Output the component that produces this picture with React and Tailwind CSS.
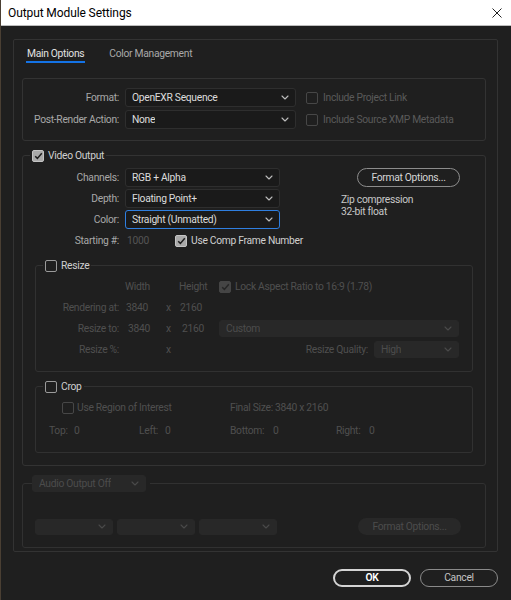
import React from "react";

function Chevron({ className = "" }) {
  return (
    <svg width="8" height="5" viewBox="0 0 8 5" className={className} fill="none">
      <path d="M1 1l3 3 3-3" stroke="currentColor" strokeWidth="1.1" strokeLinecap="round" strokeLinejoin="round" />
    </svg>
  );
}

function Dropdown({ value, className = "", active, disabled }) {
  const look = disabled
    ? "bg-[#282828] border-[#282828] text-[#4c4c4c]"
    : active
    ? "bg-[#1a1a1a] border-[#2f7fe0] text-[#dcdcdc]"
    : "bg-[#1a1a1a] border-[#2e2e2e] text-[#dcdcdc]";
  return (
    <div className={`flex items-center justify-between pl-[6px] pr-[6px] rounded-[3px] border shrink-0 ${look} ${className}`}>
      <span className="truncate">{value}</span>
      <Chevron className={disabled ? "text-[#4a4a4a]" : "text-[#bdbdbd]"} />
    </div>
  );
}

function Checkbox({ checked, disabled }) {
  const box = disabled
    ? checked
      ? "bg-[#454545] border-[#454545]"
      : "border-[#474747]"
    : checked
    ? "bg-[#a9a9a9] border-[#c4c4c4]"
    : "border-[#9a9a9a]";
  return (
    <div className={`w-[12px] h-[12px] shrink-0 rounded-[2px] border-[1.5px] flex items-center justify-center ${box}`}>
      {checked && (
        <svg width="9" height="8" viewBox="0 0 9 8" fill="none">
          <path d="M1.2 4.2l2.2 2.2L7.8 1.2" stroke={disabled ? "#262626" : "#1f1f1f"} strokeWidth="1.5" />
        </svg>
      )}
    </div>
  );
}

function GroupTitle({ checked, label }) {
  return (
    <div className="flex items-center gap-[4px] -mt-[7px] ml-[7px] px-[2px] w-fit h-[13px] bg-[#1f1f1f]">
      <Checkbox checked={checked} />
      <span className="text-[#cfcfcf] leading-[13px]">{label}</span>
    </div>
  );
}

export default function App() {
  return (
    <div className="w-[511px] h-[600px] bg-[#1f1f1f] flex flex-col overflow-hidden border-l border-[#4a3f33] font-['Roboto','Liberation_Sans',sans-serif] text-[10.3px] tracking-[-0.3px] whitespace-nowrap">
      {/* title bar */}
      <div className="h-[26px] shrink-0 bg-white flex items-center justify-between pl-[7px] pr-[9px] border-b border-[#bdbdbd]">
        <span className="text-[12px] tracking-[-0.1px] text-black">Output Module Settings</span>
        <svg width="10" height="10" viewBox="0 0 10 10">
          <path d="M0.5 0.5l9 9M9.5 0.5l-9 9" stroke="#222" strokeWidth="1" />
        </svg>
      </div>

      <div className="pt-[13px] pl-[12px]">
        <div className="w-[485px] h-[513px] border border-[#333333] rounded-[2px]">
          {/* tabs */}
          <div className="flex pl-[12px] pt-[7px] gap-[24px]">
            <span className="text-[#e2e2e2] leading-[13px] pb-[1px] border-b-2 border-[#1473e6] px-[1px]">Main Options</span>
            <span className="text-[#a9a9a9] leading-[13px]">Color Management</span>
          </div>

          <div className="ml-[8px] w-[464px]">
            {/* format box */}
            <div className="mt-[15px] h-[63px] border border-[#333333] rounded-[3px] pt-[9px] flex flex-col gap-[3px]">
              <div className="flex items-center h-[19px]">
                <span className="w-[96px] text-right text-[#a8a8a8]">Format:</span>
                <Dropdown value="OpenEXR Sequence" className="ml-[6px] w-[171px] h-[19px]" />
                <div className="ml-[10px]"><Checkbox disabled /></div>
                <span className="ml-[5px] text-[#5a5a5a]">Include Project Link</span>
              </div>
              <div className="flex items-center h-[19px]">
                <span className="w-[96px] text-right text-[#a8a8a8]">Post-Render Action:</span>
                <Dropdown value="None" className="ml-[6px] w-[171px] h-[19px]" />
                <div className="ml-[10px]"><Checkbox disabled /></div>
                <span className="ml-[5px] text-[#5a5a5a]">Include Source XMP Metadata</span>
              </div>
            </div>

            {/* video output */}
            <div className="mt-[14px] h-[311px] border border-[#333333] rounded-[3px]">
              <GroupTitle checked label="Video Output" />
              <div className="flex mt-[6px]">
                <div className="w-[257px] shrink-0 flex flex-col gap-[2px]">
                  <div className="flex items-center h-[19px]">
                    <span className="w-[96px] text-right text-[#a8a8a8]">Channels:</span>
                    <Dropdown value="RGB + Alpha" className="ml-[6px] w-[155px] h-[19px]" />
                  </div>
                  <div className="flex items-center h-[19px]">
                    <span className="w-[96px] text-right text-[#a8a8a8]">Depth:</span>
                    <Dropdown value="Floating Point+" className="ml-[6px] w-[155px] h-[19px]" />
                  </div>
                  <div className="flex items-center h-[19px]">
                    <span className="w-[96px] text-right text-[#a8a8a8]">Color:</span>
                    <Dropdown value="Straight (Unmatted)" active className="ml-[6px] w-[155px] h-[19px]" />
                  </div>
                  <div className="flex items-center h-[20px]">
                    <span className="w-[96px] shrink-0 text-right text-[#a8a8a8]">Starting #:</span>
                    <span className="ml-[8px] w-[42px] shrink-0 text-[#555555]">1000</span>
                    <div className="ml-[6px]"><Checkbox checked /></div>
                    <span className="ml-[4px] text-[#cfcfcf]">Use Comp Frame Number</span>
                  </div>
                </div>
                <div className="ml-[61px] flex flex-col">
                  <div className="ml-[16px] w-[103px] h-[19px] rounded-full border-[1.5px] border-[#8c8c8c] flex items-center justify-center text-[#d6d6d6]">
                    Format Options...
                  </div>
                  <div className="mt-[7px] leading-[12px] text-[#c8c8c8]">
                    <div>Zip compression</div>
                    <div>32-bit float</div>
                  </div>
                </div>
              </div>

              {/* resize */}
              <div className="mt-[14px] ml-[12px] w-[438px] h-[107px] border border-[#313131] rounded-[3px]">
                <GroupTitle label="Resize" />
                <div className="mt-[4px] text-[#4f4f4f]">
                  <div className="flex items-center h-[21px]">
                    <span className="w-[83px]" />
                    <span className="ml-[6px] w-[36px]">Width</span>
                    <span className="w-[15px]" />
                    <span className="ml-[3px] w-[40px]">Height</span>
                    <Checkbox checked disabled />
                    <span className="ml-[4px]">Lock Aspect Ratio to 16:9 (1.78)</span>
                  </div>
                  <div className="flex items-center h-[21px]">
                    <span className="w-[83px] text-right">Rendering at:</span>
                    <span className="ml-[6px] w-[36px] pl-[1px]">3840</span>
                    <span className="w-[15px] text-center">x</span>
                    <span className="ml-[3px] w-[40px] pl-[1px]">2160</span>
                  </div>
                  <div className="flex items-center h-[21px]">
                    <span className="w-[83px] text-right">Resize to:</span>
                    <span className="ml-[6px] w-[36px] pl-[3px]">3840</span>
                    <span className="w-[15px] text-center">x</span>
                    <span className="ml-[3px] w-[40px] pl-[3px]">2160</span>
                    <Dropdown value="Custom" disabled className="w-[240px] h-[17px]" />
                  </div>
                  <div className="flex items-center h-[21px]">
                    <span className="w-[83px] text-right">Resize %:</span>
                    <span className="ml-[6px] w-[36px]" />
                    <span className="w-[15px] text-center">x</span>
                    <span className="ml-[3px] w-[40px]" />
                    <div className="w-[240px] flex items-center justify-end">
                      <span>Resize Quality:</span>
                      <Dropdown value="High" disabled className="ml-[6px] w-[85px] h-[17px]" />
                    </div>
                  </div>
                </div>
              </div>

              {/* crop */}
              <div className="mt-[14px] ml-[12px] w-[438px] h-[67px] border border-[#313131] rounded-[3px]">
                <GroupTitle label="Crop" />
                <div className="text-[#4f4f4f]">
                  <div className="mt-[5px] flex items-center h-[20px]">
                    <div className="ml-[26px] w-[168px] flex items-center">
                      <Checkbox disabled />
                      <span className="ml-[3px]">Use Region of Interest</span>
                    </div>
                    <span>Final Size: 3840 x 2160</span>
                  </div>
                  <div className="mt-[3px] flex items-center h-[20px]">
                    <span className="ml-[13px] w-[25px]">Top:</span>
                    <span className="w-[65px]">0</span>
                    <span className="w-[26px]">Left:</span>
                    <span className="w-[65px]">0</span>
                    <span className="w-[43px]">Bottom:</span>
                    <span className="w-[63px]">0</span>
                    <span className="w-[33px]">Right:</span>
                    <span>0</span>
                  </div>
                </div>
              </div>
            </div>

            {/* audio */}
            <div className="mt-[17px] h-[65px] border border-[#313131] rounded-[3px]">
              <div className="-mt-[9px] ml-[9px] pr-[4px] w-fit bg-[#1f1f1f]">
                <Dropdown value="Audio Output Off" disabled className="w-[114px] h-[17px]" />
              </div>
              <div className="mt-[26px] ml-[12px] flex items-center">
                <Dropdown value="" disabled className="w-[78px] h-[16px]" />
                <Dropdown value="" disabled className="ml-[4px] w-[78px] h-[16px]" />
                <Dropdown value="" disabled className="ml-[4px] w-[78px] h-[16px]" />
                <div className="ml-[81px] w-[103px] h-[17px] rounded-full bg-[#282828] flex items-center justify-center text-[#4c4c4c]">
                  Format Options...
                </div>
              </div>
            </div>
          </div>
        </div>
      </div>

      {/* buttons */}
      <div className="mt-[17px] flex justify-end gap-[9px] pr-[13px]">
        <div className="w-[78px] h-[18px] rounded-full border-2 border-[#d4d4d4] flex items-center justify-center text-white font-semibold">
          OK
        </div>
        <div className="w-[78px] h-[18px] rounded-full border-[1.5px] border-[#8a8a8a] flex items-center justify-center text-[#c4c4c4]">
          Cancel
        </div>
      </div>
    </div>
  );
}
